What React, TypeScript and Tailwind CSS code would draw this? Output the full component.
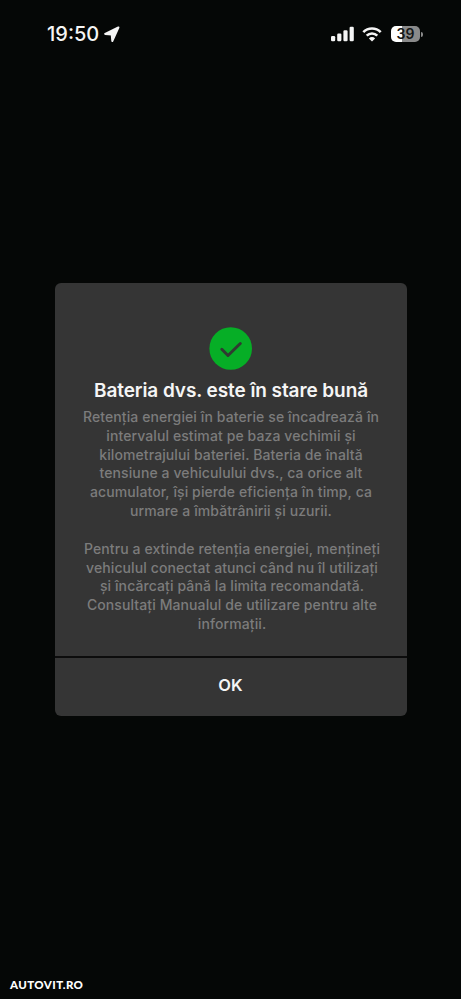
const retentionLines = [
  "Retenția energiei în baterie se încadrează în",
  "intervalul estimat pe baza vechimii și",
  "kilometrajului bateriei. Bateria de înaltă",
  "tensiune a vehiculului dvs., ca orice alt",
  "acumulator, își pierde eficiența în timp, ca",
  "urmare a îmbătrânirii și uzurii.",
];

const adviceLines = [
  "Pentru a extinde retenția energiei, mențineți",
  "vehiculul conectat atunci când nu îl utilizați",
  "și încărcați până la limita recomandată.",
  "Consultați Manualul de utilizare pentru alte",
  "informații.",
];

function StatusBar() {
  return (
    <header className="flex h-[68px] items-center justify-between pl-[47px] pr-[38px]">
      <div className="flex items-center gap-[5px]">
        <span className="text-[20px] font-medium leading-6">19:50</span>
        <svg className="h-4 w-4" viewBox="0 0 16 16" fill="currentColor">
          <path
            d="M14.4 1.5 1.2 7.9l6.5.5.6 6.6z"
            stroke="currentColor"
            strokeWidth="2"
            strokeLinejoin="round"
          />
        </svg>
      </div>

      <div className="flex items-center">
        <svg className="h-4 w-6" viewBox="0 0 24 16" fill="currentColor">
          <rect x="0" y="10" width="4.2" height="5.3" rx="1.2" />
          <rect x="6.2" y="7.6" width="4.2" height="7.7" rx="1.2" />
          <rect x="12.4" y="4.2" width="4.2" height="11.1" rx="1.2" />
          <rect x="18.6" y="0.7" width="4.2" height="14.6" rx="1.2" />
        </svg>
        <svg
          className="ml-[7px] h-[15px] w-5"
          viewBox="0 0 20 15"
          fill="none"
          stroke="currentColor"
          strokeWidth="2.6"
        >
          <path d="M1.3 5.1a12.3 12.3 0 0 1 17.4 0" />
          <path d="M4.7 8.7a7.5 7.5 0 0 1 10.6 0" />
          <path
            d="M10 14.6 6.9 11.4a4.2 4.2 0 0 1 6.2 0z"
            fill="currentColor"
            stroke="none"
          />
        </svg>
        <div className="ml-[9px] flex h-4 w-[29px] items-center justify-center rounded-[5px] bg-linear-to-r from-white from-38% to-[#8a8a8a] to-38%">
          <span className="text-[14px] font-semibold leading-4 text-[#151716]">
            39
          </span>
        </div>
        <div className="ml-px h-[5px] w-[2px] rounded-r-full bg-[#8a8a8a]" />
      </div>
    </header>
  );
}

function Paragraph({ lines }: { lines: string[] }) {
  return (
    <p className="text-[14px] font-medium leading-[18.75px] tracking-[0.1px] text-[#7c7c7c]">
      {lines.map((line) => (
        <span key={line} className="block whitespace-nowrap">
          {line}
        </span>
      ))}
    </p>
  );
}

function BatteryDialog() {
  return (
    <section
      role="dialog"
      className="flex h-[433px] w-[352px] flex-col overflow-hidden rounded-[6px] bg-[#353535] text-center"
    >
      <div className="flex h-[373px] flex-col items-center pt-[44px]">
        <svg className="mr-px h-[43px] w-[43px]" viewBox="0 0 43 43" fill="none">
          <circle cx="21.7" cy="21.5" r="21.3" fill="#06ae26" />
          <path
            d="m12.8 22.3 6.2 6.2L31.3 16.5"
            stroke="#303b31"
            strokeWidth="3"
            strokeLinecap="round"
            strokeLinejoin="round"
          />
        </svg>
        <h1 className="mt-[9px] whitespace-nowrap text-[19px] font-semibold leading-6 tracking-[-0.08px]">
          Bateria dvs. este în stare bună
        </h1>
        <div className="mt-[5px] flex flex-col gap-[19.25px]">
          <Paragraph lines={retentionLines} />
          <div className="pl-[2px]">
            <Paragraph lines={adviceLines} />
          </div>
        </div>
      </div>
      <button
        type="button"
        className="flex-1 border-t-2 border-[#0c0c0c] pb-[4px] pr-px text-[16.5px] font-semibold"
      >
        OK
      </button>
    </section>
  );
}

export default function App() {
  return (
    <main className="flex h-[999px] w-[461px] flex-col overflow-hidden bg-[#050706] font-['Inter',sans-serif] text-[#f5f5f5]">
      <StatusBar />
      <div className="flex flex-1 items-start pl-[55px] pt-[215px]">
        <BatteryDialog />
      </div>
      <footer className="pb-[6px] pl-[10px] font-['Lato',sans-serif] text-[11.5px] font-black leading-4 tracking-[0.4px] text-white">
        AUTOVIT.RO
      </footer>
    </main>
  );
}
